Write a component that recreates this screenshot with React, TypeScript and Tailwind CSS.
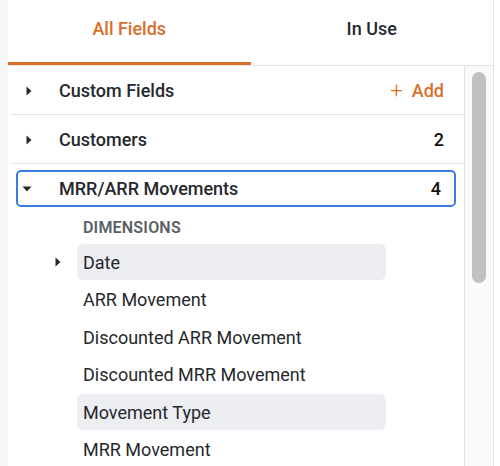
import React from "react";

const ORANGE = "text-[#d9702c]";

function CaretRight() {
  return (
    <svg width="6" height="10" viewBox="0 0 6 10" className="fill-[#25282d]">
      <path d="M0.5 0.5 L5.5 5 L0.5 9.5 Z" />
    </svg>
  );
}

function CaretDown() {
  return (
    <svg width="10" height="6" viewBox="0 0 10 6" className="fill-[#25282d]">
      <path d="M0.5 0.5 L9.5 0.5 L5 5.5 Z" />
    </svg>
  );
}

function GroupRow({ label, right }: { label: string; right: React.ReactNode }) {
  return (
    <div className="ml-[3px] flex h-[49px] items-center border-b border-[#e3e3e3] pt-[1px]">
      <div className="flex w-[36px] justify-center">
        <CaretRight />
      </div>
      <span className="ml-[12px] flex-1 text-[18px] font-medium text-[#25282d]">{label}</span>
      <span className="pr-[20px] text-[18px] font-medium">{right}</span>
    </div>
  );
}

function Item({ label, active = false, caret = false }: { label: string; active?: boolean; caret?: boolean }) {
  return (
    <div className="mb-[1.5px] flex h-[36px] items-center">
      <div className="flex w-[69px] justify-end pr-[16px]">{caret ? <CaretRight /> : null}</div>
      <div className={`flex h-full w-[309px] items-center rounded-[6px] pl-[6px] text-[18px] text-[#25282d] ${active ? "bg-[#eceef2]" : ""}`}>
        {label}
      </div>
    </div>
  );
}

export default function App() {
  return (
    <div className="flex h-[466px] w-[500px] overflow-hidden bg-white" style={{ fontFamily: "Roboto, 'Liberation Sans', sans-serif" }}>
      <div className="w-[8px] bg-[#f7f8fa]" />
      <div className="flex w-[486px] flex-col border-r border-[#e3e3e3]">
        <div className="flex h-[66px] border-b border-[#e3e3e3]">
          <div className="flex flex-1 flex-col">
            <div className={`flex flex-1 items-center justify-center pb-[6px] text-[18px] font-medium ${ORANGE}`}>All Fields</div>
            <div className="h-[3px] bg-[#d9702c]" />
          </div>
          <div className="flex flex-1 items-center justify-center pb-[9px] text-[18px] font-medium text-[#25282d]">In Use</div>
        </div>
        <div className="flex min-h-0 flex-1">
          <div className="flex-1 overflow-hidden">
            <GroupRow
              label="Custom Fields"
              right={
                <span className={`flex items-center gap-[9px] ${ORANGE}`}>
                  <span className="text-[22px] font-light leading-none">+</span>
                  <span>Add</span>
                </span>
              }
            />
            <GroupRow label="Customers" right={<span className="text-[#111]">2</span>} />
            <div className="mx-[8px] mt-[6px] flex h-[37px] items-center rounded-[5px] border-2 border-[#3b7ddf]">
              <div className="flex w-[18px] justify-center">
                <CaretDown />
              </div>
              <span className="ml-[23px] flex-1 text-[18px] font-medium text-[#25282d]">MRR/ARR Movements</span>
              <span className="pr-[13px] text-[18px] font-medium text-[#111]">4</span>
            </div>
            <div className="pl-[75px] pt-[9px] pb-[4px] text-[16px] font-semibold tracking-[0.2px] text-[#5a5f66]">DIMENSIONS</div>
            <Item label="Date" active caret />
            <Item label="ARR Movement" />
            <Item label="Discounted ARR Movement" />
            <Item label="Discounted MRR Movement" />
            <Item label="Movement Type" active />
            <Item label="MRR Movement" />
          </div>
          <div className="w-[29px] border-l border-[#e3e3e3] bg-[#fafafa] px-[7px] pt-[6px]">
            <div className="h-[211px] rounded-full bg-[#c1c1c1]" />
          </div>
        </div>
      </div>
    </div>
  );
}
